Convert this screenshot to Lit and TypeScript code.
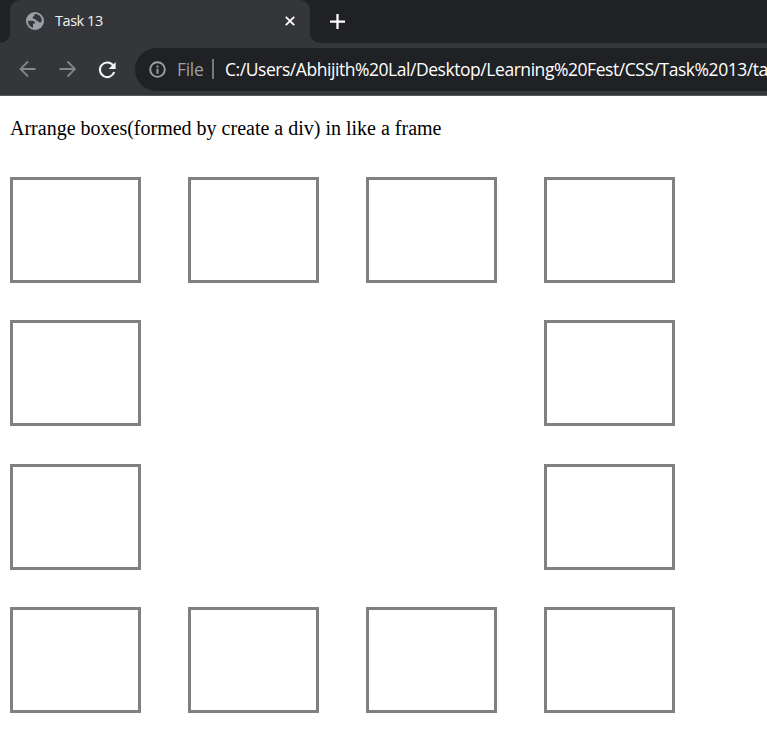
import { LitElement, html, css, svg } from "lit";
import { customElement } from "lit/decorators.js";

const CELLS = Array.from({ length: 16 }, (_, i) => {
  const row = Math.floor(i / 4);
  const col = i % 4;
  return row === 0 || row === 3 || col === 0 || col === 3;
});

@customElement("browser-chrome")
class BrowserChrome extends LitElement {
  static styles = css`
    :host { display: block; height: 96px; box-sizing: border-box; overflow: hidden;
      background: #35363a; border-bottom: 1px solid #56575a; font-family: "Open Sans", "Noto Sans", sans-serif; }
    svg { display: block; flex: none; }
    .strip { height: 43px; display: flex; background: #202124; }
    .previous { width: 10px; background: #35363a; }
    .previous-fill { height: 43px; background: #202124; border-bottom-right-radius: 10px; }
    .tab { width: 300px; height: 43px; box-sizing: border-box; display: flex; align-items: center;
      padding: 0 14px 1px 16px; background: #35363a; border-radius: 10px 10px 0 0; }
    .title { margin-left: 11px; flex: 1; font-size: 14.5px; letter-spacing: -0.45px; line-height: 20px; color: #f1f3f4; white-space: nowrap; }
    .rest { flex: 1; background: #35363a; }
    .rest-fill { height: 43px; box-sizing: border-box; background: #202124; border-bottom-left-radius: 10px; padding: 14px 0 0 20px; }
    .top-mask { background: #202124; }
    .toolbar { height: 52px; display: flex; align-items: center; padding-left: 18px; box-sizing: border-box; }
    .forward { margin-left: 20px; }
    .reload { margin-left: 19px; margin-top: 1px; }
    .address { margin-left: 18px; flex: none; width: 632px; height: 43px; box-sizing: border-box;
      display: flex; align-items: center; padding-left: 14px; background: #202124; border-radius: 22px 0 0 22px; white-space: nowrap; font-size: 17.5px; line-height: 24px; }
    .scheme { margin-left: 11px; flex: none; width: 35px; color: #9aa0a6; letter-spacing: -0.3px; }
    .bar { flex: none; width: 2px; height: 20px; background: #77797d; margin-right: 11px; }
    .url { flex: none; color: #fff; letter-spacing: -0.45px; }
  `;

  icon(size: number, content: unknown, cls = "") {
    return html`<svg class=${cls} width=${size} height=${size} viewBox="0 0 20 20" fill="none">${content}</svg>`;
  }

  render() {
    return html`
      <div class="strip">
        <div class="previous"><div class="previous-fill"></div></div>
        <div class="top-mask"><div class="tab">
          ${this.icon(18, svg`<circle cx="10" cy="10" r="10" fill="#9aa0a6"/>
            <path d="M2.2 9.6h4.6c2.2 0 3.5 1.3 3.4 3.2H7.8v4.6A7.8 7.8 0 0 1 2.2 9.6Z" fill="#35363a"/>
            <path d="M17.6 9.8c-.2 1.4-.9 1.8-2 1.8-1.5 0-2.3-.7-2.3-1.9-1.9-.1-2.9-.8-2.9-2-1.8.2-3.1-.2-3.1-1.5 0-1 .7-1.6 2-1.6V2.4c1.9-.3 3.4.1 4.7 1C16.4 4.8 17.7 7.2 17.6 9.8Z" fill="#35363a"/>`)}
          <span class="title">Task 13</span>
          ${this.icon(12, svg`<path d="M3 3 17 17M17 3 3 17" stroke="#fff" stroke-width="3"/>`)}
        </div></div>
        <div class="rest"><div class="rest-fill">
          ${this.icon(15, svg`<path d="M10 0v20M0 10h20" stroke="#fff" stroke-width="3"/>`)}
        </div></div>
      </div>
      <div class="toolbar">
        ${this.icon(20, svg`<path d="M17.5 10H2.5M10 2.5 2.5 10l7.5 7.5" stroke="#838588" stroke-width="1.8"/>`)}
        ${this.icon(20, svg`<path d="M1.5 10h15.5M9.5 2.5 17 10l-7.5 7.5" stroke="#838588" stroke-width="1.8"/>`, "forward")}
        ${this.icon(20, svg`<path d="M16.2 5.6A7.3 7.3 0 1 0 17.2 12" stroke="#f1f3f4" stroke-width="2.1"/><path d="M18.6 2V9h-7Z" fill="#f1f3f4"/>`, "reload")}
        <div class="address">
          ${this.icon(17, svg`<circle cx="10" cy="10" r="8.6" stroke="#9aa0a6" stroke-width="2.2"/><path d="M10 9v6M10 5.2v2.3" stroke="#9aa0a6" stroke-width="2.3"/>`)}
          <span class="scheme">File</span><span class="bar"></span>
          <span class="url">C:/Users/Abhijith%20Lal/Desktop/Learning%20Fest/CSS/Task%2013/ta</span>
        </div>
      </div>`;
  }
}

@customElement("app-root")
class AppRoot extends LitElement {
  static styles = css`
    :host { display: block; height: 755px; overflow: hidden; background: #fff; }
    .page { padding: 21px 10px 0; }
    .intro { margin: 0; height: 60px; font: 20px/23px "Liberation Serif", serif; color: #000; }
    .frame { display: grid; grid-template-columns: repeat(4, 131px); grid-auto-rows: 106px; gap: 37.4px 47px; }
    .box { border: 3px solid #808080; }
  `;

  render() {
    return html`
      <browser-chrome></browser-chrome>
      <main class="page">
        <p class="intro">Arrange boxes(formed by create a div) in like a frame</p>
        <div class="frame">${CELLS.map((filled) => html`<div class=${filled ? "box" : "space"}></div>`)}</div>
      </main>`;
  }
}
